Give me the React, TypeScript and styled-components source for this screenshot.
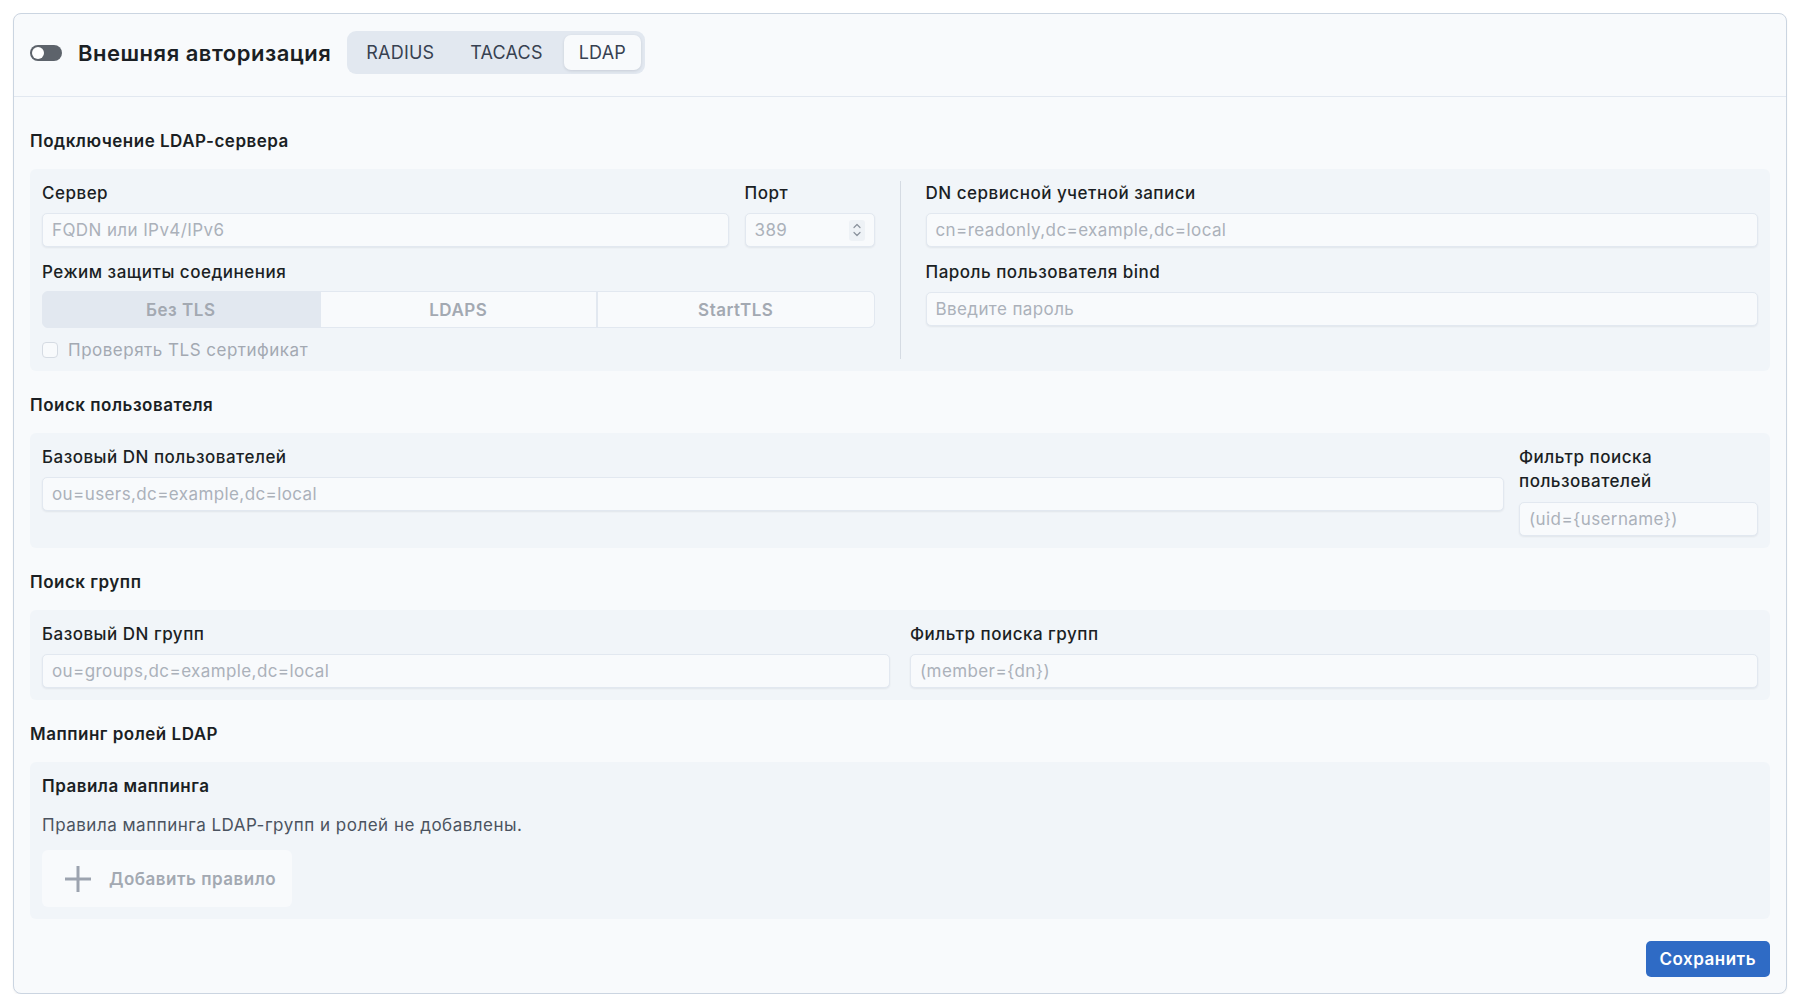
import React from 'react';
import styled, { createGlobalStyle } from 'styled-components';

const GlobalStyle = createGlobalStyle`
  html, body {
    margin: 0;
    background: #ffffff;
    overflow: hidden;
  }
  body {
    font-family: Inter, "Noto Sans", "Liberation Sans", sans-serif;
    color: #1b1f24;
    letter-spacing: 0.5px;
  }
  * {
    box-sizing: border-box;
  }
`;

const Page = styled.div`
  padding: 13px 15px 0 13px;
`;

const Card = styled.div`
  background: #f8fafc;
  border: 1px solid #cbd5e1;
  border-radius: 8px;
  box-shadow: 0 1px 2px rgba(15, 23, 42, 0.06);
`;

const Header = styled.div`
  display: flex;
  align-items: center;
  gap: 16px;
  padding: 17px 16px 22px;
  border-bottom: 1px solid #e2e8f0;
`;

const Toggle = styled.div`
  width: 32px;
  height: 16px;
  border-radius: 8px;
  background: #5d636b;
  padding: 2px;
  display: flex;
  align-items: center;
`;

const Knob = styled.span`
  width: 12px;
  height: 12px;
  border-radius: 50%;
  background: #ffffff;
`;

const Title = styled.h1`
  margin: 0;
  font-size: 22px;
  font-weight: 600;
  line-height: 28px;
  color: #1b1f24;
`;

const Tabs = styled.div`
  display: flex;
  gap: 6px;
  padding: 4px;
  background: #e2e8f0;
  border-radius: 9px;
`;

const Tab = styled.button<{ $active?: boolean }>`
  height: 35px;
  padding: 0 15px;
  border: none;
  border-radius: 7px;
  font-family: inherit;
  font-size: 18px;
  letter-spacing: 0.2px;
  color: #374151;
  background: ${(p) => (p.$active ? '#f8fafc' : 'transparent')};
  box-shadow: ${(p) => (p.$active ? '0 1px 3px rgba(15, 23, 42, 0.12)' : 'none')};
`;

const Body = styled.div`
  padding: 32px 16px 16px;
  display: flex;
  flex-direction: column;
  gap: 22px;
`;

const Section = styled.section`
  display: flex;
  flex-direction: column;
  gap: 16px;
`;

const SectionTitle = styled.h2`
  margin: 0;
  font-size: 17px;
  line-height: 24px;
  font-weight: 600;
  color: #1b1f24;
`;

const Panel = styled.div<{ $cols: string; $gap: number }>`
  display: grid;
  grid-template-columns: ${(p) => p.$cols};
  column-gap: ${(p) => p.$gap}px;
  align-items: start;
  padding: 12px;
  background: #f1f5f9;
  border-radius: 6px;
`;

const Stack = styled.div`
  display: flex;
  flex-direction: column;
  gap: 13px;
`;

const Column = styled.div`
  display: flex;
  flex-direction: column;
`;

const Divider = styled.div`
  align-self: stretch;
  background: #d5dbe3;
`;

const Row = styled.div`
  display: flex;
  gap: 16px;
`;

const Field = styled.div<{ $width?: number; $gap?: number }>`
  display: flex;
  flex-direction: column;
  gap: ${(p) => p.$gap ?? 8}px;
  flex: ${(p) => (p.$width ? `0 0 ${p.$width}px` : '1')};
`;

const Label = styled.label`
  font-size: 17px;
  line-height: 24px;
  font-weight: 500;
  color: #1b1f24;
`;

const InputBox = styled.div`
  display: flex;
  align-items: center;
  height: 34px;
  padding: 0 9px;
  background: #f8fafc;
  border: 1px solid #e2e8f0;
  border-radius: 5px;
  box-shadow: 0 1px 2px rgba(15, 23, 42, 0.07);
`;

const Placeholder = styled.span`
  flex: 1;
  font-size: 17px;
  letter-spacing: 0.4px;
  color: #abb1ba;
  white-space: nowrap;
`;

const Spinner = styled.span`
  width: 16px;
  height: 21px;
  border-radius: 3px;
  background: #eef2f6;
  display: flex;
  align-items: center;
  justify-content: center;
`;

const Segmented = styled.div`
  display: grid;
  grid-template-columns: 1fr 1fr 1fr;
  height: 37px;
  border: 1px solid #e2e8f0;
  border-radius: 6px;
  overflow: hidden;
  background: #e2e8f0;
  gap: 2px;
`;

const Segment = styled.div<{ $active?: boolean }>`
  display: flex;
  align-items: center;
  justify-content: center;
  font-size: 17px;
  font-weight: 600;
  color: #a3a9b2;
  background: ${(p) => (p.$active ? '#e2e8f0' : '#f8fafc')};
`;

const CheckRow = styled.div`
  margin-top: 13px;
  display: flex;
  align-items: center;
  gap: 10px;
  font-size: 17px;
  line-height: 18px;
  color: #a3a9b2;
`;

const CheckBox = styled.span`
  width: 16px;
  height: 16px;
  border: 1px solid #d5dbe3;
  border-radius: 4px;
  background: #f8fafc;
`;

const SubTitle = styled.div`
  font-size: 17px;
  line-height: 24px;
  font-weight: 600;
  color: #1b1f24;
`;

const Hint = styled.p`
  margin: 15px 0 13px;
  font-size: 17px;
  line-height: 24px;
  color: #4b5360;
`;

const AddButton = styled.button`
  align-self: flex-start;
  display: flex;
  align-items: center;
  gap: 16px;
  height: 57px;
  padding: 0 16px 0 21px;
  border: none;
  border-radius: 6px;
  background: #f8fafc;
  font-family: inherit;
  font-size: 17px;
  letter-spacing: 0.5px;
  font-weight: 600;
  color: #a3a9b2;
`;

const Footer = styled.div`
  display: flex;
  justify-content: flex-end;
`;

const SaveButton = styled.button`
  height: 36px;
  padding: 0 14px;
  border: none;
  border-radius: 5px;
  background: #2f6bc5;
  color: #ffffff;
  font-family: inherit;
  font-size: 17px;
  letter-spacing: 0.5px;
  font-weight: 600;
`;

const Input = ({ placeholder, spin }: { placeholder: string; spin?: boolean }) => (
  <InputBox>
    <Placeholder>{placeholder}</Placeholder>
    {spin && (
      <Spinner>
        <svg width="10" height="16" viewBox="0 0 10 16" fill="none" stroke="#8a929c" strokeWidth="1.2" strokeLinecap="round" strokeLinejoin="round">
          <path d="M2 5.5 5 2.5 8 5.5" />
          <path d="M2 10.5 5 13.5 8 10.5" />
        </svg>
      </Spinner>
    )}
  </InputBox>
);

export default function App() {
  return (
    <Page>
      <GlobalStyle />
      <Card>
        <Header>
          <Toggle>
            <Knob />
          </Toggle>
          <Title>Внешняя авторизация</Title>
          <Tabs>
            <Tab>RADIUS</Tab>
            <Tab>TACACS</Tab>
            <Tab $active>LDAP</Tab>
          </Tabs>
        </Header>

        <Body>
          <Section>
            <SectionTitle>Подключение LDAP-сервера</SectionTitle>
            <Panel $cols="1fr 1px 1fr" $gap={25}>
              <Column>
                <Stack>
                  <Row>
                    <Field>
                      <Label>Сервер</Label>
                      <Input placeholder="FQDN или IPv4/IPv6" />
                    </Field>
                    <Field $width={130}>
                      <Label>Порт</Label>
                      <Input placeholder="389" spin />
                    </Field>
                  </Row>
                  <Field $gap={7}>
                    <Label>Режим защиты соединения</Label>
                    <Segmented>
                      <Segment $active>Без TLS</Segment>
                      <Segment>LDAPS</Segment>
                      <Segment>StartTLS</Segment>
                    </Segmented>
                  </Field>
                </Stack>
                <CheckRow>
                  <CheckBox />
                  Проверять TLS сертификат
                </CheckRow>
              </Column>
              <Divider />
              <Stack>
                <Field>
                  <Label>DN сервисной учетной записи</Label>
                  <Input placeholder="cn=readonly,dc=example,dc=local" />
                </Field>
                <Field>
                  <Label>Пароль пользователя bind</Label>
                  <Input placeholder="Введите пароль" />
                </Field>
              </Stack>
            </Panel>
          </Section>

          <Section>
            <SectionTitle>Поиск пользователя</SectionTitle>
            <Panel $cols="1fr 239px" $gap={15}>
              <Field>
                <Label>Базовый DN пользователей</Label>
                <Input placeholder="ou=users,dc=example,dc=local" />
              </Field>
              <Field $gap={9}>
                <Label>Фильтр поиска пользователей</Label>
                <Input placeholder="(uid={username})" />
              </Field>
            </Panel>
          </Section>

          <Section>
            <SectionTitle>Поиск групп</SectionTitle>
            <Panel $cols="1fr 1fr" $gap={20}>
              <Field>
                <Label>Базовый DN групп</Label>
                <Input placeholder="ou=groups,dc=example,dc=local" />
              </Field>
              <Field>
                <Label>Фильтр поиска групп</Label>
                <Input placeholder="(member={dn})" />
              </Field>
            </Panel>
          </Section>

          <Section>
            <SectionTitle>Маппинг ролей LDAP</SectionTitle>
            <Panel $cols="1fr" $gap={0}>
              <Column>
                <SubTitle>Правила маппинга</SubTitle>
                <Hint>Правила маппинга LDAP-групп и ролей не добавлены.</Hint>
                <AddButton>
                  <svg width="30" height="30" viewBox="0 0 30 30" fill="none" stroke="#9ca3af" strokeWidth="3">
                    <path d="M15 2v26M2 15h26" />
                  </svg>
                  Добавить правило
                </AddButton>
              </Column>
            </Panel>
          </Section>

          <Footer>
            <SaveButton>Сохранить</SaveButton>
          </Footer>
        </Body>
      </Card>
    </Page>
  );
}
